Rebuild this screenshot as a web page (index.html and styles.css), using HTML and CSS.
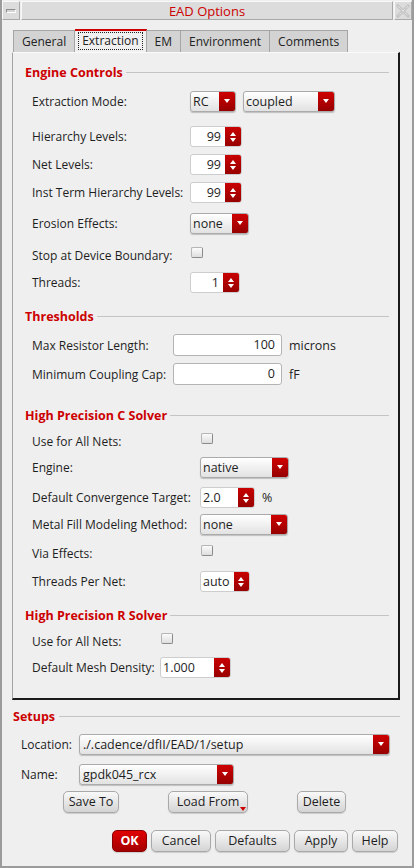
FILE: index.html
```html
<!DOCTYPE html>
<html>
<head>
<meta charset="utf-8">
<title>EAD Options</title>
<link rel="stylesheet" href="styles.css">
</head>
<body>
<div class="window">
  <div class="titlebar">
    <div class="tb-btn tb-min"><span class="min-glyph"></span></div>
    <div class="tb-title">EAD Options</div>
    <div class="tb-btn tb-close">
      <svg width="14" height="14" viewBox="0 0 14 14"><path d="M2 2L12 12M12 2L2 12" stroke="#c4c4c4" stroke-width="3" stroke-linecap="square"/><path d="M2 2L12 12M12 2L2 12" stroke="#f4f4f4" stroke-width="1" stroke-dasharray="1 1"/></svg>
    </div>
  </div>

  <div class="tabs">
    <div class="tab">General</div>
    <div class="tab active"><span class="focus">Extraction</span></div>
    <div class="tab">EM</div>
    <div class="tab">Environment</div>
    <div class="tab">Comments</div>
  </div>

  <div class="panel">
    <div class="sec-head first">Engine Controls</div>
    <div class="sec sec-engine">
      <div class="row gap10"><span class="label">Extraction Mode:</span>
        <div class="combo w-rc"><span class="val">RC</span><span class="cbtn"></span></div>
        <div class="combo w-coupled"><span class="val">coupled</span><span class="cbtn"></span></div>
      </div>
      <div class="row gap13"><span class="label">Hierarchy Levels:</span>
        <div class="spin w-52"><span class="num">99</span><span class="sbtn"><i class="up"></i><i class="dn"></i></span></div>
      </div>
      <div class="row"><span class="label">Net Levels:</span>
        <div class="spin w-52"><span class="num">99</span><span class="sbtn"><i class="up"></i><i class="dn"></i></span></div>
      </div>
      <div class="row"><span class="label">Inst Term Hierarchy Levels:</span>
        <div class="spin w-52"><span class="num">99</span><span class="sbtn"><i class="up"></i><i class="dn"></i></span></div>
      </div>
      <div class="row gap9"><span class="label">Erosion Effects:</span>
        <div class="combo w-erosion"><span class="val">none</span><span class="cbtn"></span></div>
      </div>
      <div class="row gap10"><span class="label">Stop at Device Boundary:</span>
        <span class="check"></span>
      </div>
      <div class="row gap5"><span class="label">Threads:</span>
        <div class="spin w-50"><span class="num">1</span><span class="sbtn"><i class="up"></i><i class="dn"></i></span></div>
      </div>
    </div>

    <div class="sec-head gap15">Thresholds</div>
    <div class="sec sec-thresh">
      <div class="row gap10"><span class="label">Max Resistor Length:</span>
        <span class="field">100</span><span class="unit">microns</span>
      </div>
      <div class="row gap7"><span class="label">Minimum Coupling Cap:</span>
        <span class="field">0</span><span class="unit">fF</span>
      </div>
    </div>

    <div class="sec-head gap22">High Precision C Solver</div>
    <div class="sec sec-hpc">
      <div class="row gap7"><span class="label">Use for All Nets:</span>
        <span class="check"></span>
      </div>
      <div class="row gap4"><span class="label">Engine:</span>
        <div class="combo w-engine"><span class="val">native</span><span class="cbtn"></span></div>
      </div>
      <div class="row gap8"><span class="label">Default Convergence Target:</span>
        <div class="spin w-55"><span class="num left">2.0</span><span class="sbtn"><i class="up"></i><i class="dn"></i></span></div>
        <span class="unit">%</span>
      </div>
      <div class="row gap5"><span class="label">Metal Fill Modeling Method:</span>
        <div class="combo w-fill"><span class="val">none</span><span class="cbtn"></span></div>
      </div>
      <div class="row gap7"><span class="label">Via Effects:</span>
        <span class="check"></span>
      </div>
      <div class="row"><span class="label">Threads Per Net:</span>
        <div class="spin w-50"><span class="num left">auto</span><span class="sbtn"><i class="up"></i><i class="dn"></i></span></div>
      </div>
    </div>

    <div class="sec-head gap15">High Precision R Solver</div>
    <div class="sec sec-hpr">
      <div class="row gap7"><span class="label">Use for All Nets:</span>
        <span class="check"></span>
      </div>
      <div class="row gap4"><span class="label">Default Mesh Density:</span>
        <div class="spin w-71"><span class="num left">1.000</span><span class="sbtn"><i class="up"></i><i class="dn"></i></span></div>
      </div>
    </div>
  </div>

  <div class="setups">
    <div class="sec-head">Setups</div>
    <div class="sec sec-setups">
      <div class="row gap9"><span class="label">Location:</span>
        <div class="combo w-loc"><span class="val">./.cadence/dfII/EAD/1/setup</span><span class="cbtn"></span></div>
      </div>
      <div class="row gap8"><span class="label">Name:</span>
        <div class="combo w-name"><span class="val">gpdk045_rcx</span><span class="cbtn"></span></div>
      </div>
    </div>
    <div class="setup-buttons">
      <button class="btn w-save">Save To</button>
      <button class="btn w-load">Load From<span class="menu-mark"></span></button>
      <button class="btn w-del">Delete</button>
    </div>
  </div>

  <div class="actions">
    <button class="btn ok">OK</button>
    <button class="btn w-cancel">Cancel</button>
    <button class="btn w-defaults">Defaults</button>
    <button class="btn w-apply">Apply</button>
    <button class="btn w-help">Help</button>
  </div>
</div>
</body>
</html>
```

FILE: styles.css
```css
* { box-sizing: border-box; }
html, body { margin: 0; padding: 0; }
body {
  font-family: "Open Sans", "DejaVu Sans", sans-serif;
  font-size: 12px;
  color: #1e1e1e;
  background: #efefef;
}
.window {
  width: 414px;
  height: 868px;
  background: #efefef;
  border: 2px solid #9b9b9b;
  border-top: none;
  position: relative;
}

/* title bar */
.titlebar {
  display: flex;
  height: 20px;
  gap: 1px;
  padding-top: 1px;
}
.tb-btn, .tb-title {
  background: #dcdcdc;
  border-top: 1px solid #f8f8f8;
  border-left: 1px solid #f8f8f8;
  border-right: 1px solid #a9a9a9;
  border-bottom: 1px solid #a9a9a9;
  display: flex;
  align-items: center;
  justify-content: center;
}
.tb-min { width: 18px; }
.min-glyph {
  width: 10px;
  height: 4px;
  border: 1px solid #8e8e8e;
  border-right-color: #fff;
  border-bottom-color: #fff;
  background: #d4d4d4;
}
.tb-title {
  flex: 1;
  color: #cc0000;
  font-size: 13px;
  line-height: 18px;
}
.tb-close { width: 18px; }

/* tabs */
.tabs {
  display: flex;
  margin: 9px 0 0 11px;
  height: 23px;
  align-items: flex-end;
}
.tab {
  height: 22px;
  padding: 0 8px;
  background: #d3d3d3;
  border: 1px solid #a5a5a5;
  border-bottom: none;
  border-left: none;
  font-size: 12px;
  line-height: 22px;
  color: #222;
}
.tab:first-child { border-left: 1px solid #a5a5a5; }
.tab.active {
  background: #f0f0f0;
  border-top: 2px solid #cc0000;
  height: 23px;
  line-height: 20px;
  padding: 0 3px;
}
.tab .focus {
  display: inline-block;
  border: 1px dotted #222;
  line-height: 16px;
  padding: 0 3px;
}

/* panel */
.panel {
  margin-left: 10px;
  width: 388px;
  height: 648px;
  border-left: 1px solid #a3a3a3;
  border-top: 1px solid #fafafa;
  border-right: 2px solid #1a1a1a;
  border-bottom: 2px solid #1a1a1a;
  padding: 0 9px 0 12px;
}

.sec-head {
  display: flex;
  align-items: center;
  height: 16px;
  font-weight: bold;
  color: #cc0000;
  font-size: 12.5px;
  white-space: nowrap;
}
.sec-head::after {
  content: "";
  flex: 1;
  height: 1px;
  background: #c4c4c4;
  margin-left: 3px;
  margin-top: 1px;
}
.sec-head.first { margin-top: 11px; }

.sec { padding-left: 7px; }
.row {
  display: flex;
  align-items: center;
  height: 22px;
  margin-top: 6px;
  white-space: nowrap;
}
.gap4 { margin-top: 4px; }
.gap5 { margin-top: 5px; }
.gap7 { margin-top: 7px; }
.gap8 { margin-top: 8px; }
.gap9 { margin-top: 9px; }
.gap10 { margin-top: 10px; }
.gap13 { margin-top: 13px; }
.gap15 { margin-top: 15px; }
.gap22 { margin-top: 22px; }

.label { flex: none; }
.sec-engine .label { width: 158px; }
.sec-thresh .label { width: 141px; }
.sec-hpc .label { width: 168px; }
.sec-hpr .label { width: 128px; }
.sec-setups .label { width: 58px; }

/* combo box */
.combo {
  display: flex;
  height: 21px;
  border: 1px solid #ababab;
  border-radius: 3px;
  background: linear-gradient(#ffffff, #e2e2e2);
  box-shadow: 0 1px 1px rgba(0, 0, 0, 0.2);
  overflow: hidden;
  flex: none;
}
.combo .val {
  flex: 1;
  padding-left: 2px;
  line-height: 19px;
  font-size: 12.5px;
  overflow: hidden;
}
.cbtn {
  width: 16px;
  background: linear-gradient(#cf0000, #960000);
  display: flex;
  align-items: center;
  justify-content: center;
}
.cbtn::after {
  content: "";
  border-left: 3.5px solid transparent;
  border-right: 3.5px solid transparent;
  border-top: 4px solid #fff;
}
.w-rc { width: 46px; }
.w-coupled { width: 92px; margin-left: 7px; }
.w-erosion { width: 59px; }
.w-engine { width: 89px; }
.w-fill { width: 88px; }
.w-loc { width: 311px; }
.w-name { width: 155px; }

/* spinner */
.spin {
  display: flex;
  height: 21px;
  border: 1px solid #cdcdcd;
  border-radius: 3px;
  background: #fff;
  overflow: hidden;
  flex: none;
}
.spin .num {
  flex: 1;
  text-align: right;
  padding-right: 4px;
  line-height: 19px;
  font-size: 12.5px;
}
.spin .num.left { text-align: left; padding-left: 2px; }
.sbtn {
  width: 16px;
  background: linear-gradient(#c80000, #980000);
  display: flex;
  flex-direction: column;
  align-items: center;
  justify-content: space-between;
  padding: 5px 0 4px;
}
.sbtn i { display: block; width: 0; height: 0; }
.sbtn .up {
  border-left: 3.5px solid transparent;
  border-right: 3.5px solid transparent;
  border-bottom: 4px solid #fff;
}
.sbtn .dn {
  border-left: 3.5px solid transparent;
  border-right: 3.5px solid transparent;
  border-top: 4px solid #fff;
}
.w-50 { width: 50px; }
.w-52 { width: 52px; }
.w-55 { width: 55px; }
.w-71 { width: 71px; }

/* checkbox */
.check {
  width: 12px;
  height: 11px;
  border: 1px solid #8a8a8a;
  border-top-color: #b5b5b5;
  border-left-color: #b5b5b5;
  border-radius: 2px;
  background: linear-gradient(#fbfbfb, #dedede);
  margin-left: 1px;
  margin-top: -5px;
}

/* text field */
.field {
  width: 109px;
  height: 22px;
  border: 1px solid #b4b4b4;
  border-radius: 3px;
  background: #fff;
  text-align: right;
  padding-right: 6px;
  line-height: 20px;
  font-size: 12.5px;
}
.unit { margin-left: 7px; font-size: 12.5px; }

/* setups */
.setups {
  margin: 8px 12px 0 11px;
}
.setups .sec-head::after { margin-left: 4px; }
.sec-setups { padding-left: 8px; }
.sec-setups .combo .val { padding-left: 3px; }

.setup-buttons {
  display: flex;
  gap: 49px;
  margin: 6px 0 0 50px;
}

.btn {
  font-family: "Open Sans", "DejaVu Sans", sans-serif;
  font-size: 12.5px;
  color: #1e1e1e;
  height: 22px;
  padding: 0;
  border: 1px solid #a9a9a9;
  border-radius: 5px;
  background: linear-gradient(#f9f9f9, #d4d4d4);
  box-shadow: 0 1px 1px rgba(0, 0, 0, 0.15);
  line-height: 20px;
  position: relative;
}
.w-save { width: 56px; }
.w-load { width: 80px; }
.w-del { width: 49px; }
.menu-mark {
  position: absolute;
  right: 1px;
  bottom: 1px;
  width: 0;
  height: 0;
  border-left: 3.5px solid transparent;
  border-right: 3.5px solid transparent;
  border-top: 4px solid #cc0000;
}

.actions {
  display: flex;
  justify-content: flex-end;
  gap: 4px;
  margin: 17px 14px 0 0;
}
.ok {
  width: 35px;
  background: linear-gradient(#e00000, #a40000);
  border-color: #8a0000;
  color: #fff;
  font-weight: bold;
}
.w-cancel { width: 60px; }
.w-defaults { width: 75px; }
.w-apply { width: 54px; }
.w-help { width: 46px; }
```
